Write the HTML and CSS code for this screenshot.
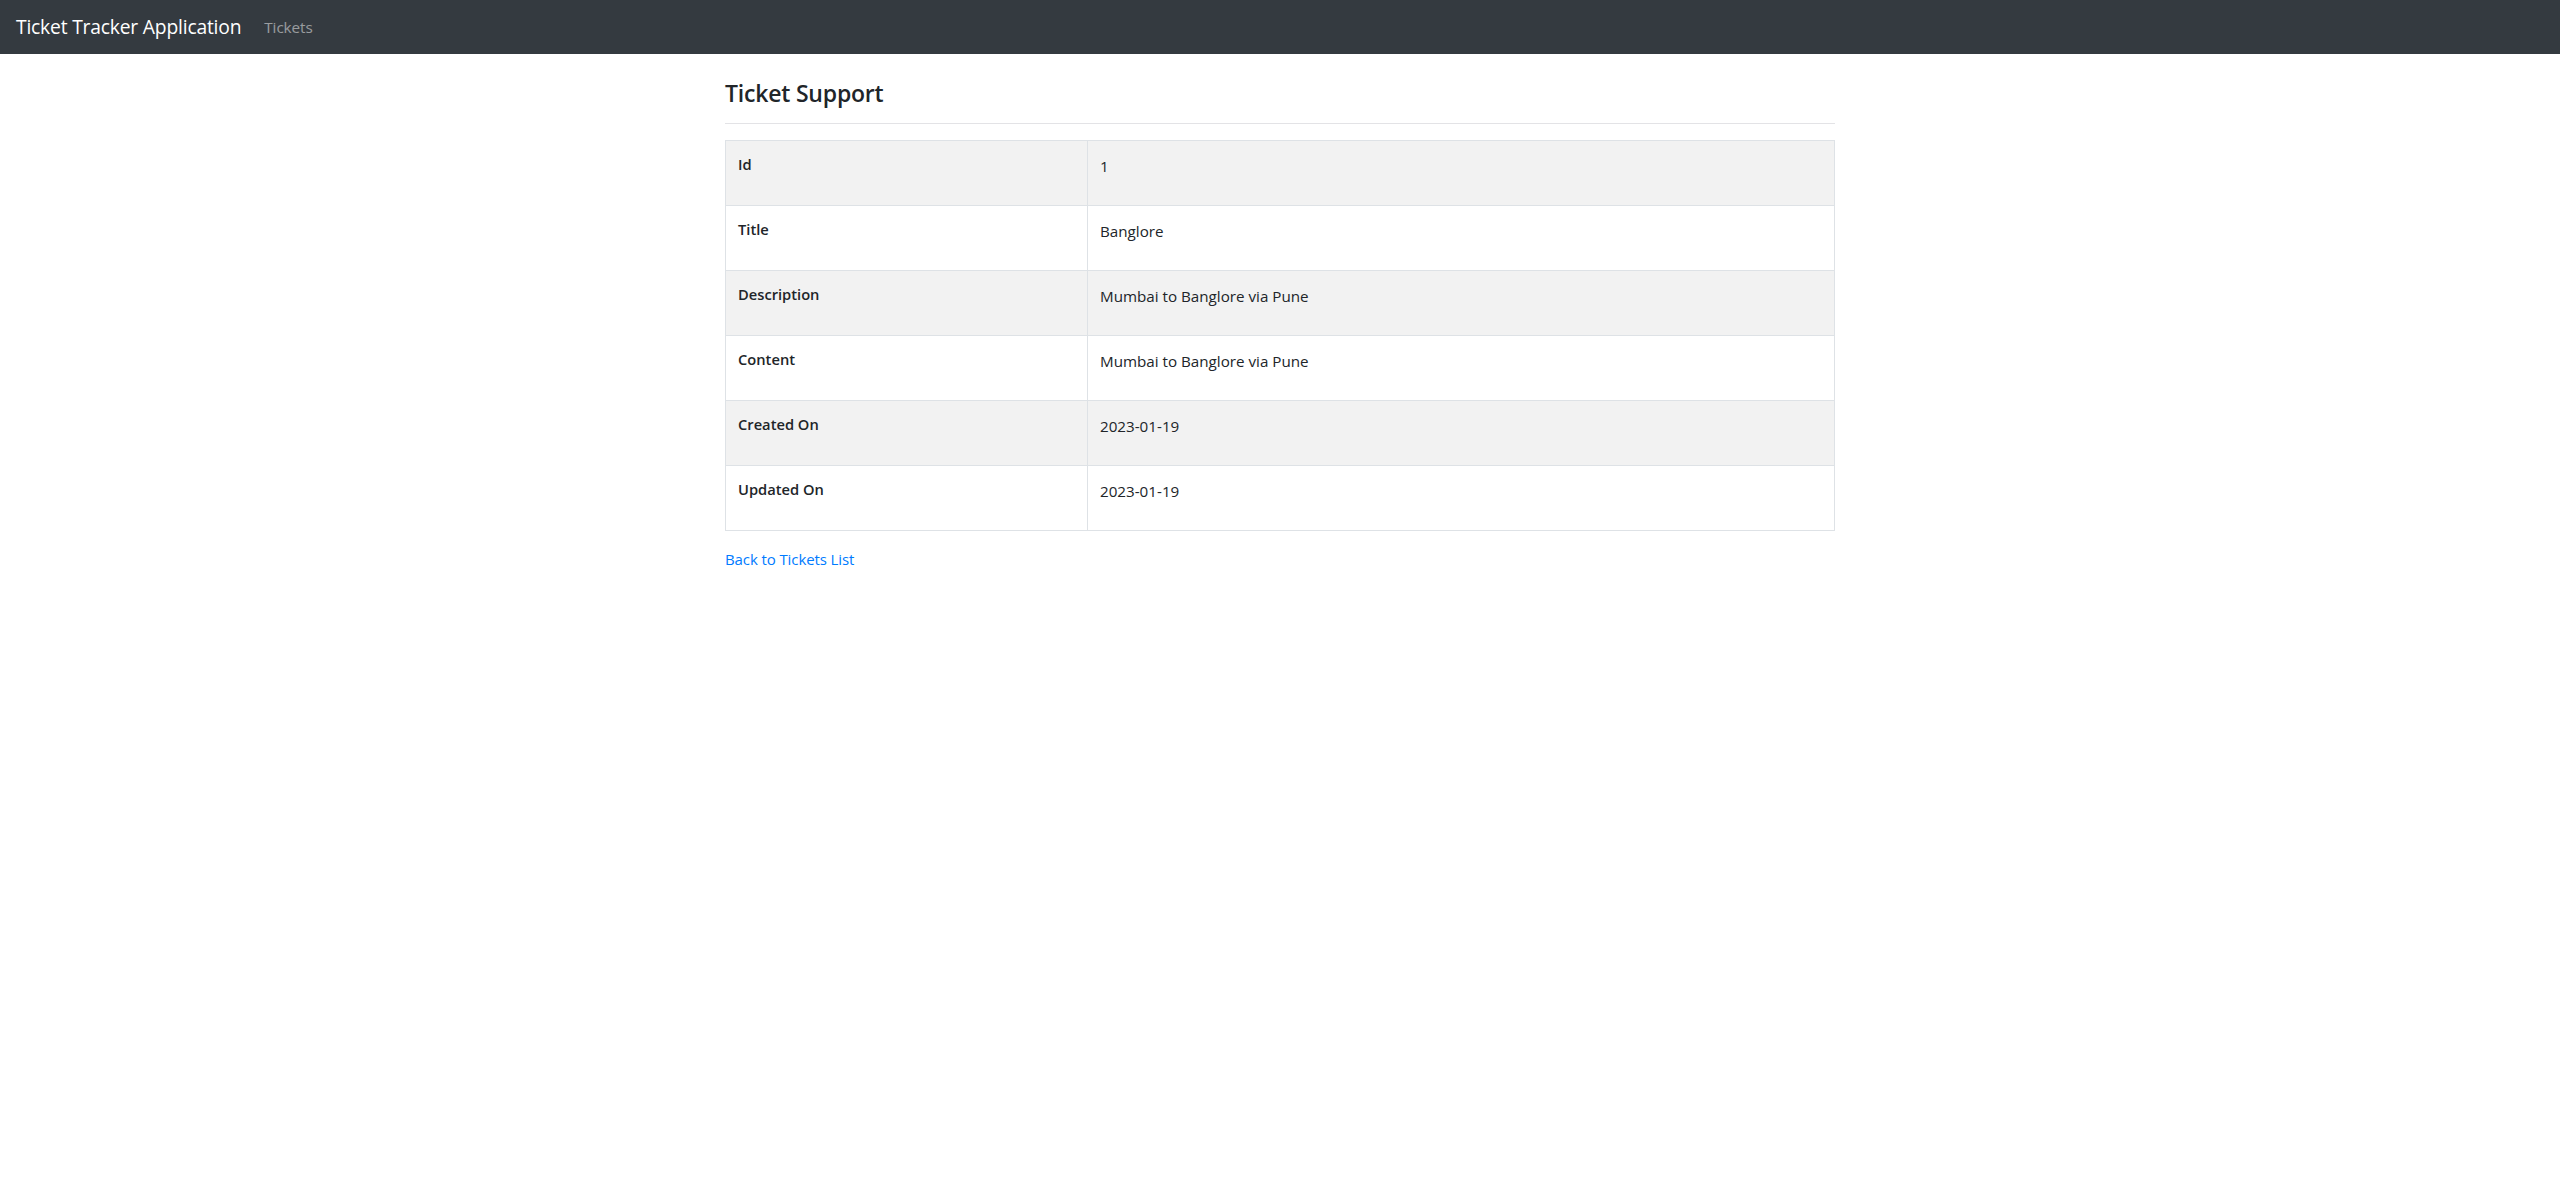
FILE: index.html
```html
<!DOCTYPE html>
<html lang="en">
<head>
<meta charset="utf-8">
<title>Ticket Tracker Application</title>
<link rel="stylesheet" href="styles.css">
</head>
<body>
<nav class="navbar">
  <a class="brand" href="#">Ticket Tracker Application</a>
  <a class="nav-link" href="#">Tickets</a>
</nav>
<main class="container">
  <h4 class="title">Ticket Support</h4>
  <hr class="rule">
  <table class="details">
    <tbody>
      <tr><th>Id</th><td><p>1</p></td></tr>
      <tr><th>Title</th><td><p>Banglore</p></td></tr>
      <tr><th>Description</th><td><p>Mumbai to Banglore via Pune</p></td></tr>
      <tr><th>Content</th><td><p>Mumbai to Banglore via Pune</p></td></tr>
      <tr><th>Created On</th><td><p>2023-01-19</p></td></tr>
      <tr><th>Updated On</th><td><p>2023-01-19</p></td></tr>
    </tbody>
  </table>
  <a class="back" href="#">Back to Tickets List</a>
</main>
</body>
</html>
```
FILE: styles.css
```css
* { box-sizing: border-box; }
html, body { margin: 0; padding: 0; }
body {
  font-family: "Segoe UI", "Open Sans", "Noto Sans", "Liberation Sans", sans-serif;
  font-size: 15px;
  line-height: 1.5;
  color: #212529;
  background: #fff;
}
a { text-decoration: none; }

.navbar {
  height: 54px;
  background: #343a40;
  display: flex;
  align-items: center;
  padding: 0 16px;
}
.brand {
  color: #fff;
  font-size: 19.3px;
  line-height: 28px;
  margin-right: 23px;
  letter-spacing: -0.2px;
}
.nav-link {
  color: rgba(255,255,255,.5);
  font-size: 15.3px;
  letter-spacing: -0.1px;
}

.container {
  width: 1110px;
  margin: 0 auto;
  padding-top: 24px;
}
.title {
  margin: 0;
  font-size: 23px;
  font-weight: 600;
  line-height: 30px;
  letter-spacing: -0.2px;
}
.rule {
  margin: 15px 0 16px;
  border: 0;
  border-top: 1px solid #e3e3e6;
  height: 0;
}

.details {
  width: 100%;
  border-collapse: collapse;
  border: 1px solid #dee2e6;
  margin-bottom: 17px;
}
.details tr:nth-child(odd) { background: #f2f2f2; }
.details th, .details td {
  border: 1px solid #dee2e6;
  vertical-align: top;
  text-align: left;
  padding: 12px 12px 10px;
  height: 65px;
}
.details th {
  width: 362px;
  font-weight: 600;
  font-size: 14.7px;
  line-height: 22px;
}
.details td {
  font-size: 15.2px;
  padding-top: 14px;
}
.details td p {
  margin: 0;
  line-height: 22px;
}
.back {
  display: inline-block;
  color: #007bff;
  font-size: 15px;
  letter-spacing: -0.1px;
}
```
